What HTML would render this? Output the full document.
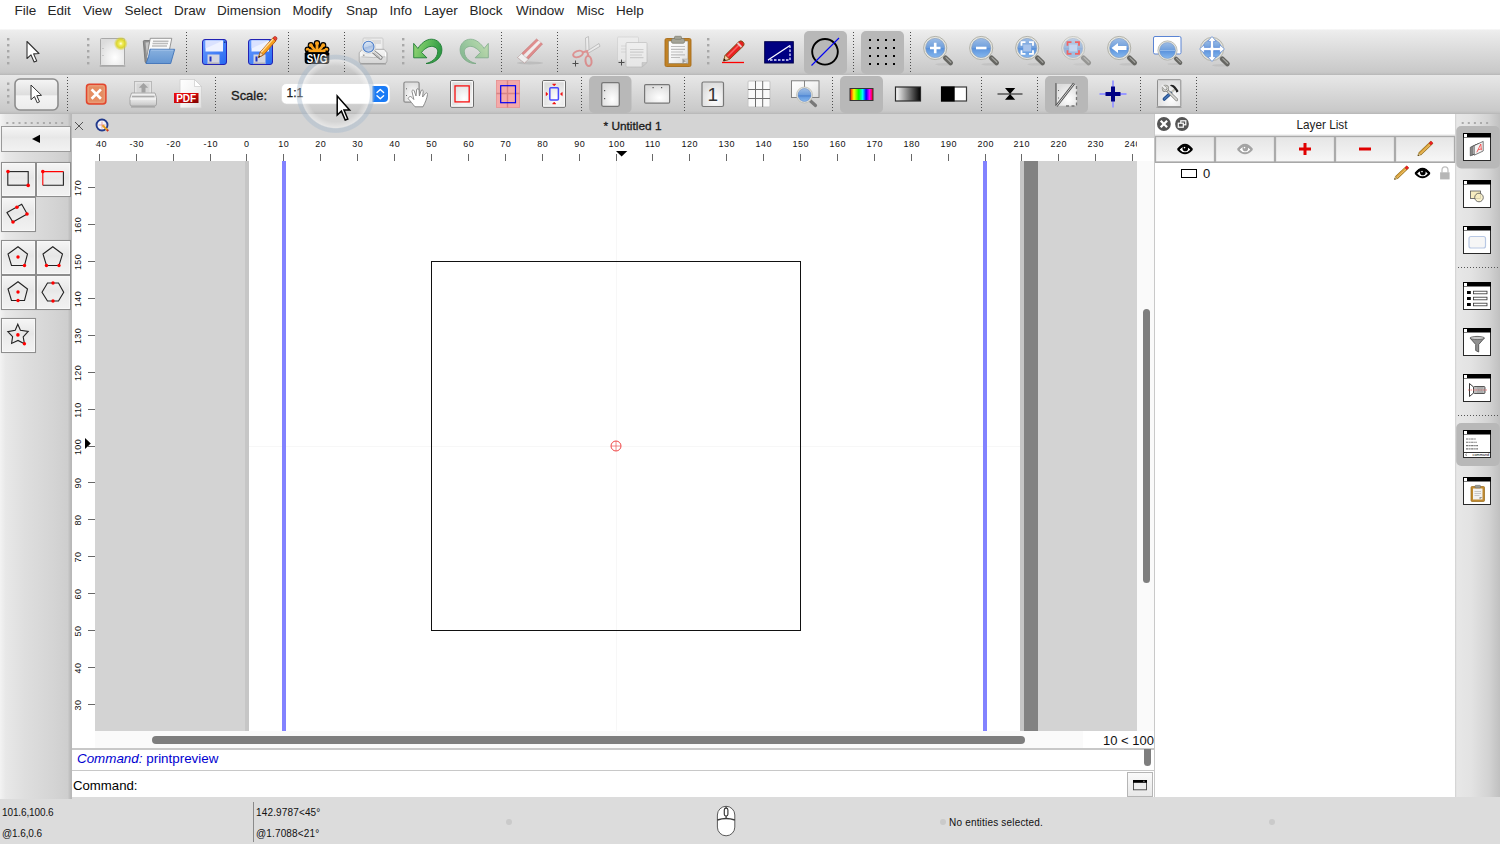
<!DOCTYPE html>
<html><head><meta charset="utf-8"><title>QCAD</title>
<style>
*{box-sizing:border-box;margin:0;padding:0}
html,body{width:1500px;height:844px;overflow:hidden;background:#fff;font-family:"Liberation Sans",sans-serif;color:#000}
.abs,.abs>*{position:absolute}
svg{position:absolute;overflow:visible}
#menu{left:0;top:0;width:1500px;height:30px;background:#fff}
#menu span{top:3px;font-size:13.5px;color:#262626;white-space:nowrap;line-height:16px}
#tb1{left:0;top:29px;width:1500px;height:46px;background:linear-gradient(#fafafa 0,#eeeeee 3%,#ebebeb 8%,#d9d9d9 52%,#c9c9c9 93%,#c4c4c4 96%,#b7b7b7 100%)}
#tb2{left:0;top:75px;width:1500px;height:39px;background:linear-gradient(#e9e9e9 0,#e6e6e6 5%,#d6d6d6 52%,#c9c9c9 92%,#c2c2c2 96%,#b6b6b6 100%)}
#left{left:0;top:114px;width:72px;height:684.500px;background:linear-gradient(90deg,#f3f3f3 0,#e8e8e8 8%,#dedede 35%,#d4d4d4 75%,#cecece 94%,#bcbcbc 97.5%,#b6b6b6 100%)}
#tabbar{left:72px;top:114px;width:1082px;height:24px;background:#d4d4d4}
#rulerh{left:72px;top:138px;width:1082px;height:23px;background:#fff;overflow:hidden}
#rulerv{left:72px;top:161px;width:23px;height:570px;background:#fff;overflow:hidden}
#canvas{left:95px;top:161px;width:1042px;height:570px;background:#fff;overflow:hidden}
#vscroll{left:1137px;top:161px;width:17px;height:570px;background:#fafafa}
#hscroll{left:95px;top:731px;width:988px;height:17px;background:#fafafa}
#zoomlbl{left:1083px;top:731px;width:71px;height:17px;background:#fff;font-size:13px;text-align:right;padding-right:0;line-height:19px;color:#111;overflow:hidden}
#cmdhist{left:72px;top:748px;width:1082px;height:23px;background:#fff;border-top:2px solid #c8c8c8;border-bottom:1px solid #c8c8c8}
#cmdline{left:72px;top:771px;width:1082px;height:27px;background:#fff}
#layers{left:1154px;top:114px;width:301px;height:683px;background:#fff;border-left:1px solid #c9c9c9}
#right{left:1455px;top:114px;width:45px;height:683px;background:linear-gradient(90deg,#cfcfcf 0,#e7e7e7 4%,#e3e3e3 35%,#d3d3d3 75%,#c0c0c0 100%)}
#status{left:0;top:797px;width:1500px;height:47px;background:#dcdcdc}
.st{font-size:10px;line-height:12px;color:#111;white-space:nowrap}
.hd{width:2px;height:2px;background:#aaa}
.vsep{width:1px;background:repeating-linear-gradient(#444 0 1px,transparent 1px 3px)}
.hl{background:#b9b9b9;border-radius:5px}
.rt{font-size:9px;color:#111;white-space:nowrap;line-height:10px;letter-spacing:.4px}
</style></head><body>
<div id="menu" class="abs"><span style="left:14.5px">File</span><span style="left:47.5px">Edit</span><span style="left:83px">View</span><span style="left:124.5px">Select</span><span style="left:174px">Draw</span><span style="left:217px">Dimension</span><span style="left:292.5px">Modify</span><span style="left:346px">Snap</span><span style="left:389.5px">Info</span><span style="left:424px">Layer</span><span style="left:469.5px">Block</span><span style="left:516px">Window</span><span style="left:576.5px">Misc</span><span style="left:616px">Help</span></div>
<div id="tb1" class="abs"></div>
<div id="tb2" class="abs"></div>
<div id="left" class="abs"></div>
<div id="tabbar" class="abs"></div>
<svg id="tb1svg" style="left:0;top:30px" width="1500" height="45" viewBox="0 30 1500 45" font-family="Liberation Sans, sans-serif">
<defs>
<linearGradient id="pg" x1="0" y1="0" x2="1" y2="1"><stop offset="0" stop-color="#fff"/><stop offset=".5" stop-color="#f4f4f4"/><stop offset="1" stop-color="#dedede"/></linearGradient>
<radialGradient id="pgr" cx=".6" cy=".7" r=".7"><stop offset="0" stop-color="#fff"/><stop offset="1" stop-color="#dcdcdc"/></radialGradient>
<radialGradient id="glow"><stop offset="0" stop-color="#fffff0"/><stop offset=".25" stop-color="#f2ee60"/><stop offset=".6" stop-color="#dcd628" stop-opacity=".95"/><stop offset="1" stop-color="#d8d020" stop-opacity="0"/></radialGradient>
<linearGradient id="lens" x1="0" y1="0" x2="0" y2="1"><stop offset="0" stop-color="#9dbde6"/><stop offset=".48" stop-color="#6f9fdc"/><stop offset=".52" stop-color="#5a92dc"/><stop offset="1" stop-color="#86b8ee"/></linearGradient>
<linearGradient id="grn" x1="0" y1="0" x2="1" y2=".3"><stop offset="0" stop-color="#9cd878"/><stop offset=".5" stop-color="#62bc5c"/><stop offset="1" stop-color="#2f9a44"/></linearGradient>
<linearGradient id="flp" x1="0" y1="0" x2="1" y2="1"><stop offset="0" stop-color="#6a9cff"/><stop offset="1" stop-color="#2468f0"/></linearGradient>
<linearGradient id="fold" x1="0" y1="0" x2="0" y2="1"><stop offset="0" stop-color="#88b0de"/><stop offset="1" stop-color="#6496d2"/></linearGradient>
<linearGradient id="prn1" x1="0" y1="0" x2="0" y2="1"><stop offset="0" stop-color="#f6f6f6"/><stop offset=".5" stop-color="#ececec"/><stop offset=".55" stop-color="#e0e0e0"/><stop offset="1" stop-color="#d4d4d4"/></linearGradient><linearGradient id="lens2" x1="0" y1="0" x2=".3" y2="1"><stop offset="0" stop-color="#e4eefa"/><stop offset=".55" stop-color="#c0d2ea"/><stop offset=".6" stop-color="#a4bce0"/><stop offset="1" stop-color="#c4d6ee"/></linearGradient><g id="mag"><ellipse cx="9" cy="16.300" rx="9" ry="1.300" fill="#888" opacity=".18"/><line x1="7" y1="7" x2="10" y2="10" stroke="#9c9c98" stroke-width="2.400"/><line x1="10.300" y1="10" x2="15.300" y2="14.800" stroke="#666662" stroke-width="5" stroke-linecap="round"/><line x1="10.800" y1="9.600" x2="15.600" y2="14.200" stroke="#a2a29e" stroke-width="1.300" stroke-linecap="round"/><circle r="11.6" fill="#e6e6de" stroke="#a4a49c" stroke-width=".8"/><circle r="9.6" fill="url(#lens)" stroke="#7a94bc" stroke-width=".6"/></g>
<g id="hdl5" fill="#a8a8a8"><rect y="38" width="2.4" height="2.4"/><rect y="44" width="2.4" height="2.4"/><rect y="50" width="2.4" height="2.4"/><rect y="56" width="2.4" height="2.4"/><rect y="62" width="2.4" height="2.4"/></g>
<line id="sp1" y1="32" y2="72" stroke="#4c4c4c" stroke-width="1" stroke-dasharray="1 2"/>
<g id="floppy"><rect x=".5" y=".5" width="24" height="25" rx="2.5" fill="url(#flp)" stroke="#2222b4"/><path d="M3.5 1.5h17.5v11h-17.5z" fill="#eef2ff"/><path d="M3.5 1.5h17.5l-17.5 8z" fill="#d4ddff" opacity=".8"/><rect x="22" y="2.5" width="1.5" height="1.5" fill="#1a3a90"/><rect x="5.5" y="15.5" width="12" height="9.5" fill="#d4d6e0"/><rect x="7.5" y="17.5" width="2" height="5" fill="#2030c0"/><rect x="6" y="23.5" width="11" height="1.5" fill="#b0b0b8"/></g>
</defs>
<use href="#hdl5" x="7"/>
<path d="M27 41.5v17l4-3.6 3.1 7.1 2.6-1.1-3.1-7 5.4-.4z" fill="#fff" stroke="#333" stroke-width="1.1" stroke-linejoin="round"/>
<use href="#hdl5" x="87"/>
<!-- new -->
<rect x="99.5" y="65" width="26" height="2" rx="1" fill="#999" opacity=".55"/>
<rect x="100.5" y="38.5" width="24" height="27" rx="1" fill="url(#pgr)" stroke="#a8a8a8"/>
<rect x="102.5" y="48" width="1" height="1" fill="#aaa"/><rect x="102.5" y="55" width="1" height="1" fill="#aaa"/>
<circle cx="120.8" cy="43.6" r="7" fill="url(#glow)"/>
<!-- open -->
<path d="M143.300 41.500q0-1 1-1h5.500l1 1.500v20l-4.500 1q-1 0-1.200-1.200z" fill="#909090" stroke="#6e6e6e" stroke-width=".8"/>
<path d="M145.500 42.500l3.500-.3-1.500 19z" fill="#c8c8c8"/>
<path d="M150.300 38.300h21.500l-2.300 11.200-23 9z" fill="#fafafa" stroke="#808080" stroke-width=".8" stroke-linejoin="round"/>
<path d="M153 41.200h15.500M152.500 43.600h15.500M152 46h15" stroke="#bcbcbc" stroke-width="1.500"/>
<path d="M150 49.200l24.700.1-4 14.200h-24.700q3-6 4-14.300z" fill="url(#fold)" stroke="#3f73b8" stroke-width=".9" stroke-linejoin="round"/>
<path d="M151 50.200h22.300" stroke="#a8c8ec" stroke-width=".8"/>
<use href="#sp1" x="186.500"/>
<use href="#floppy" x="202" y="39"/>
<use href="#floppy" x="248" y="39"/>
<!-- pencil on save-as -->
<path d="M258.500 57.500l1.800-5.500 12.500-14 3.200 2.800-12.600 14.200z" fill="#f6a020" stroke="#b85c10" stroke-width=".9" stroke-linejoin="round"/>
<path d="M272.800 38l1.400-1.300q1.200-.6 2.200.4t.4 2.100l-1.300 1.600z" fill="#f04030" stroke="#a02818" stroke-width=".7"/>
<path d="M261 52.500l12.200-13.600" stroke="#ffe0a0" stroke-width="1.200"/>
<path d="M258.500 57.500l1.800-5.500 3 2.800z" fill="#f4d8b0" stroke="#8a4a10" stroke-width=".6"/><path d="M258.500 57.500l.7-2 1.200 1.200z" fill="#222"/>
<use href="#sp1" x="288.500"/>
<!-- svg -->
<g stroke="#000" stroke-width="5.400" stroke-linecap="round"><path d="M317 53V43.600M317 53l-6-7.500M317 53l6-7.500M317 53l-9.200-3.300M317 53l9.200-3.300"/></g>
<g fill="#000"><circle cx="317" cy="43.300" r="3.200"/><circle cx="310.800" cy="45.200" r="3.100"/><circle cx="323.200" cy="45.200" r="3.100"/><circle cx="307.600" cy="49.600" r="3"/><circle cx="326.400" cy="49.600" r="3"/></g>
<g stroke="#f9a21c" stroke-width="2.800" stroke-linecap="round"><path d="M317 53V43.600M317 53l-6-7.500M317 53l6-7.500M317 53l-9.200-3.300M317 53l9.200-3.300"/></g>
<g fill="#f9a21c"><circle cx="317" cy="43.300" r="2"/><circle cx="310.800" cy="45.200" r="1.900"/><circle cx="323.200" cy="45.200" r="1.900"/><circle cx="307.600" cy="49.600" r="1.800"/><circle cx="326.400" cy="49.600" r="1.800"/></g>
<path d="M306.500 50.500h21l1.800 3v7.500q0 3-3 3h-18.600q-3 0-3-3v-7.500z" fill="#000"/>
<path d="M308.500 51h17" stroke="#f9a21c" stroke-width="2.200"/>
<text x="317" y="62.600" font-size="12.500" font-weight="bold" fill="#fff" text-anchor="middle" textLength="20.500" lengthAdjust="spacingAndGlyphs">SVG</text>
<use href="#sp1" x="344.500"/>
<!-- print preview -->
<rect x="363" y="38" width="20" height="13" rx="1" fill="#ececec" stroke="#c4c4c4" stroke-width=".8"/>
<rect x="372" y="40" width="9" height="9" fill="#dcdcdc"/><rect x="375" y="44" width="6" height="5" fill="#f0f0f0"/>
<path d="M362.200 49.300h22l2.800 3.500v8.200q0 2.500-2.500 2.500h-22.800q-2.500 0-2.500-2.500v-8.200z" fill="url(#prn1)" stroke="#a8a8a8" stroke-width=".9"/>
<path d="M361.500 56.800q12 1.600 23.500 0" stroke="#c0c0c0" stroke-width="1" fill="none"/><path d="M361 52.500v3.500M385.500 52.500v3.500" stroke="#fff" stroke-width="1"/>
<rect x="363.200" y="54.600" width="1.200" height="1.200" fill="#777"/>
<path d="M360 64h26" stroke="#8a8a8a" stroke-width="1.400" opacity=".55"/>
<line x1="373.500" y1="51.700" x2="380.600" y2="57.600" stroke="#7c7c7c" stroke-width="4" stroke-linecap="round"/><line x1="373.500" y1="51.700" x2="380.600" y2="57.600" stroke="#e6e6e6" stroke-width="2.400" stroke-linecap="round"/><line x1="374" y1="52.700" x2="380" y2="57.700" stroke="#a0a0a0" stroke-width=".7"/>
<circle cx="368.500" cy="46.700" r="7.100" fill="#f7f7f5" stroke="#cdcdc9" stroke-width=".6"/>
<circle cx="368.500" cy="46.700" r="5.500" fill="url(#lens2)" stroke="#4a7cc8" stroke-width="1.100"/>
<use href="#hdl5" x="402"/>
<!-- undo / redo -->
<g id="undo"><path d="M413.700 43.400L417.900 48.500C421 43.500 426 39.200 431.400 39.200C437.500 39.200 442 44 441.900 50C441.800 58 434 64 426 63.500C431 62.500 437.500 58.500 437.700 51.800C437.800 48.500 435 46.400 431.400 46.400C427.500 46.400 424 49.500 421.500 52.400L426.900 57.800L413.700 57.800z" fill="url(#grn)" stroke="#1f7c34" stroke-width=".9" stroke-linejoin="round"/></g>
<use href="#undo" transform="translate(902,0) scale(-1,1)" opacity=".45"/>
<use href="#sp1" x="501.500"/>
<!-- eraser (disabled) -->
<g opacity=".7">
<ellipse cx="530" cy="63" rx="13" ry="1.500" fill="#999" opacity=".5"/>
<path d="M517.500 57.500l19-18.500 6 5-18 19z" fill="#e06c6c" stroke="#b84848" stroke-width=".6"/>
<path d="M519.500 59l19-18.600 2.300 1.900-18.400 19z" fill="#f8f4f4"/>
<path d="M517.500 57.500l4-3.900 6.800 5.800-3.800 3.600z" fill="#fbfbfb" stroke="#aaa" stroke-width=".6"/>
</g>
<use href="#sp1" x="557.500"/>
<!-- scissors (disabled) -->
<g opacity=".55">
<path d="M585.500 38l3-1.500 .5 14-3 2z" fill="#f4f4f4" stroke="#888" stroke-width=".7"/>
<path d="M599 43.500l1 2.800-11.500 6.700-2-1.500z" fill="#f4f4f4" stroke="#888" stroke-width=".7"/>
<ellipse cx="578" cy="54" rx="5" ry="3" transform="rotate(-18 578 54)" fill="none" stroke="#e05a5a" stroke-width="2"/>
<ellipse cx="588.500" cy="61" rx="3" ry="5" transform="rotate(-8 588.500 61)" fill="none" stroke="#e05a5a" stroke-width="2"/>
<path d="M582.500 52.500l4.500-1.500 1.500 5" fill="none" stroke="#e05a5a" stroke-width="2"/>
</g>
<path d="M572.500 63.500h6M575.500 60.500v6" stroke="#4c4c4c" stroke-width="1"/>
<!-- copy (disabled) -->
<g opacity=".6">
<rect x="617.500" y="37" width="21" height="24" rx="1" fill="#f2f2f2" stroke="#c8c8c8" stroke-width=".8"/>
<path d="M621 46h8M621 49h8M621 52h8" stroke="#d0d0d0" stroke-width="1.200"/>
<path d="M626 43.500q0-1 1-1h19q1 0 1 1v19l-5 4.500h-15q-1 0-1-1z" fill="#f8f8f8" stroke="#b0b0b0" stroke-width=".8"/>
<path d="M630 49.500h13.500M630 52.200h13.500M630 55h12M630 57.700h13.500" stroke="#c4c4c4" stroke-width="1.200"/>
<path d="M647 62.500l-5 4.500v-4.500z" fill="#c8c8c8" stroke="#aaa" stroke-width=".5"/>
</g>
<path d="M618.500 62.500h6M621.500 59.500v6" stroke="#4c4c4c" stroke-width="1"/>
<!-- paste -->
<rect x="665" y="38.500" width="26" height="28" rx="1.500" fill="#c08226" stroke="#a86c18" stroke-width=".9"/>
<rect x="668.500" y="41" width="19.500" height="22.500" fill="url(#pg)" stroke="#8c7a58" stroke-width=".6"/>
<path d="M671 46.500h14M671 49.300h14M671 52h12M671 54.800h14M671 57.500h9" stroke="#bdbdbd" stroke-width="1.200"/>
<path d="M682.500 63.500v-4.500h5.500z" fill="#9a9a9a"/><path d="M682.500 59h5.500v4.500z" fill="#d0d0d0" stroke="#999" stroke-width=".4"/>
<rect x="671.500" y="38.500" width="13" height="4.800" rx="1.500" fill="#a4a498" stroke="#7c7c70" stroke-width=".7"/>
<rect x="674.500" y="36.300" width="7" height="3" rx="1" fill="#a4a498" stroke="#7c7c70" stroke-width=".7"/>
<use href="#hdl5" x="707"/>
<!-- red pencil -->
<path d="M722 62.500h22" stroke="#f00" stroke-width="1.300"/>
<path d="M723.500 61l1.800-6 13.700-13.500q2-1.500 4 .4t.6 3.900l-13.900 13.500z" fill="#e82020" stroke="#7a4a10" stroke-width=".9" stroke-linejoin="round"/>
<path d="M727.500 56.500l12.500-12.500" stroke="#f86060" stroke-width="1.600"/>
<path d="M737.500 43l4 4" stroke="#e8c8c8" stroke-width="1.800"/>
<path d="M723.500 61l1.800-6 4.300 4.200z" fill="#f0d0a8" stroke="#7a4a10" stroke-width=".7"/><path d="M723.500 61l.8-2.500 1.700 1.700z" fill="#111"/>
<!-- measure -->
<rect x="764.700" y="41.700" width="28.600" height="21.300" fill="#000082" stroke="#00004c" stroke-width="1"/>
<path d="M768 60l22-14.500" stroke="#fff" stroke-width="1.300"/>
<path d="M790 45.500v14.500h-22" fill="none" stroke="#e4e4ff" stroke-width="1.300" stroke-dasharray="2.500 1.500"/>
<!-- circle tool highlighted -->
<rect x="804" y="31" width="43" height="43" rx="5" fill="#b8b8b8"/>
<circle cx="825" cy="51.800" r="12.800" fill="none" stroke="#000" stroke-width="1.900"/>
<path d="M811.500 65.500l27.500-27.500" stroke="#0000f4" stroke-width="1.100"/>
<use href="#sp1" x="853.500"/>
<rect x="861" y="31" width="43" height="43" rx="5" fill="#b8b8b8"/>
<g fill="#000"><rect x="869" y="39" width="2" height="2"/><rect x="877" y="39" width="2" height="2"/><rect x="885" y="39" width="2" height="2"/><rect x="893" y="39" width="2" height="2"/><rect x="869" y="47" width="2" height="2"/><rect x="877" y="47" width="2" height="2"/><rect x="885" y="47" width="2" height="2"/><rect x="893" y="47" width="2" height="2"/><rect x="869" y="55" width="2" height="2"/><rect x="877" y="55" width="2" height="2"/><rect x="885" y="55" width="2" height="2"/><rect x="893" y="55" width="2" height="2"/><rect x="869" y="63" width="2" height="2"/><rect x="877" y="63" width="2" height="2"/><rect x="885" y="63" width="2" height="2"/><rect x="893" y="63" width="2" height="2"/></g>
<use href="#sp1" x="910.500"/>
<!-- zooms -->
<use href="#mag" x="935.200" y="48"/><path d="M930 48h10.500M935.200 42.700v10.600" stroke="#fff" stroke-width="2.600"/>
<use href="#mag" x="981.200" y="48"/><path d="M976 48h10.500" stroke="#fff" stroke-width="2.600"/>
<use href="#mag" x="1027.200" y="48"/><rect x="1023.200" y="44.500" width="8" height="7" fill="#a8c4ec"/><path d="M1021.500 45.800v-3.600h4M1029 42.200h4v3.600M1033 50.200v3.600h-4M1025.500 53.800h-4v-3.600" fill="none" stroke="#fff" stroke-width="1.800"/>
<g opacity=".55"><use href="#mag" x="1073.200" y="48"/></g><rect x="1069.200" y="44.500" width="8" height="7" fill="#c4d6f0"/><path d="M1067.500 45.800v-3.600h4M1075 42.200h4v3.600M1079 50.200v3.600h-4M1071.500 53.800h-4v-3.600" fill="none" stroke="#f06464" stroke-width="1.800"/>
<use href="#mag" x="1119.200" y="48"/><path d="M1111.500 48l6.500-5v3h8.500v4h-8.500v3z" fill="#fff"/>
<rect x="1153.500" y="36.500" width="27.500" height="17.500" rx="1.500" fill="#fff" stroke="#5a84d4" stroke-width="1"/>
<g transform="translate(1167.500 50.500) scale(.83)"><use href="#mag"/></g>
<path d="M1160 50.500h15" stroke="#9cc0ee" stroke-width=".8"/>
<use href="#mag" x="1212" y="49"/>
<path d="M1199.500 49l4.800-4.200v2.600h6.100v-6.100h-2.600l4.200-4.800 4.200 4.800h-2.600v6.100h6.100v-2.600l4.800 4.200-4.800 4.200v-2.600h-6.100v6.100h2.600l-4.200 4.800-4.200-4.800h2.600v-6.100h-6.100v2.600z" fill="#fff" stroke="#5a8ad8" stroke-width=".7" stroke-linejoin="round"/>
</svg>
<svg id="tb2svg" style="left:0;top:75px" width="1500" height="39" viewBox="0 75 1500 39" font-family="Liberation Sans, sans-serif">
<defs>
<line id="sp2" y1="77" y2="112" stroke="#4c4c4c" stroke-width="1" stroke-dasharray="1 2"/>
<linearGradient id="btn" x1="0" y1="0" x2="0" y2="1"><stop offset="0" stop-color="#f6f6f6"/><stop offset=".5" stop-color="#dedede"/><stop offset=".55" stop-color="#f4f4f4"/><stop offset="1" stop-color="#ececec"/></linearGradient>
<linearGradient id="rb" x1="0" y1="0" x2="1" y2="0"><stop offset="0" stop-color="#f00"/><stop offset=".17" stop-color="#ff0"/><stop offset=".38" stop-color="#0f0"/><stop offset=".55" stop-color="#0ff"/><stop offset=".7" stop-color="#00f"/><stop offset=".85" stop-color="#f0f"/><stop offset="1" stop-color="#f00"/></linearGradient>
<linearGradient id="bwg" x1="0" y1="0" x2="1" y2="0"><stop offset="0" stop-color="#fff"/><stop offset="1" stop-color="#000"/></linearGradient>
<linearGradient id="pdfr" x1="0" y1="0" x2="1" y2="1"><stop offset="0" stop-color="#f01010"/><stop offset=".5" stop-color="#d00808"/><stop offset="1" stop-color="#7a0000"/></linearGradient>
<linearGradient id="prn" x1="0" y1="0" x2="0" y2="1"><stop offset="0" stop-color="#f2f2f2"/><stop offset=".6" stop-color="#e2e2e2"/><stop offset="1" stop-color="#c4c4c4"/></linearGradient>
</defs>
<g fill="#a8a8a8"><rect x="7" y="82.500" width="2.400" height="2.400"/><rect x="7" y="88.800" width="2.400" height="2.400"/><rect x="7" y="95" width="2.400" height="2.400"/><rect x="7" y="101.200" width="2.400" height="2.400"/></g>
<rect x="15" y="79" width="43" height="31" rx="5" fill="url(#btn)" stroke="#8c8c8c" stroke-width="1.600"/>
<path d="M31 85v14.700l3.500-3.100 2.700 6.200 2.300-1-2.700-6.100 4.700-.4z" fill="#fff" stroke="#333" stroke-width="1" stroke-linejoin="round"/>
<use href="#sp2" x="67.500"/>
<!-- close preview -->
<rect x="86.500" y="84.200" width="19.400" height="19.700" rx="3" fill="#e58d62" stroke="#e2452e" stroke-width="1.500"/>
<rect x="88.200" y="85.900" width="16" height="16.300" rx="1.500" fill="none" stroke="#eca380" stroke-width="1"/>
<path d="M91.600 89.400l9.300 9.300M100.900 89.400l-9.300 9.300" stroke="#fff" stroke-width="2.700"/>
<!-- print -->
<rect x="134.500" y="81.500" width="17" height="13" fill="#e4e4e4" stroke="#b4b4b4" stroke-width=".9"/>
<rect x="136.500" y="83.500" width="13" height="9" fill="#d6d6d6"/>
<path d="M141.500 92.500v-4.700h-2.700l4.700-4.800 4.700 4.800h-2.700v4.700z" fill="#a2a2a2"/>
<path d="M131.500 93h23.500l1.500 4.500v6.500q0 2-2 2h-22.500q-2 0-2-2v-6.500z" fill="url(#prn)" stroke="#a0a0a0" stroke-width=".9"/>
<path d="M132 96.500h22.500" stroke="#aaa" stroke-width="1.600"/><path d="M130 99h26" stroke="#fafafa" stroke-width="1"/>
<path d="M131 107h24" stroke="#8c8c8c" stroke-width="1.200" opacity=".6"/>
<!-- pdf -->
<path d="M180 79.500h14.500l7 7v21.500h-21.500z" fill="url(#pg)" stroke="#cfcfcf" stroke-width=".8"/>
<path d="M194.500 79.500v7h7z" fill="#fff" stroke="#c4c4c4" stroke-width=".6"/>
<rect x="174" y="93" width="24.500" height="10" fill="url(#pdfr)"/>
<text x="186.200" y="101.800" font-size="10.500" font-weight="bold" fill="#fff" text-anchor="middle" textLength="20" lengthAdjust="spacingAndGlyphs">PDF</text>
<use href="#sp2" x="215.500"/>
<text x="231" y="99.600" font-size="13.300" fill="#1c1c1c" stroke="#1c1c1c" stroke-width=".35" textLength="36" lengthAdjust="spacingAndGlyphs">Scale:</text>
<!-- combo -->
<rect x="281.500" y="83.500" width="108.500" height="20.500" rx="5" fill="#fff" stroke="#d9d9d9" stroke-width=".6"/>
<text x="286.500" y="97.300" font-size="12" fill="#222" stroke="#222" stroke-width=".25">1:1</text>
<path d="M372.500 86h11.500q4 0 4 4v8q0 4-4 4h-11.500z" fill="#1a7bf6"/>
<path d="M377 92.500l3.300-3 3.300 3M377 95.800l3.300 3 3.300-3" fill="none" stroke="#fff" stroke-width="1.400" stroke-linecap="round" stroke-linejoin="round"/>
<!-- hand/pan -->
<rect x="403.900" y="82" width="15.200" height="20.200" rx="1.500" fill="url(#pgr)" stroke="#8a8a8a" stroke-width="1.200"/>
<rect x="406" y="88.300" width="1" height="1" fill="#666"/><rect x="406" y="95" width="1" height="1" fill="#666"/>
<path d="M408.800 97.500C409.500 96 411 96.300 412 97.500L413.800 99.500L412 91.500C411.600 90 413.600 89.300 414.200 90.800L416 96L416.600 90C416.600 88.200 419 88.200 419 90L419.400 96L421 91C421.400 89.400 423.500 89.800 423.200 91.500L422.600 97L425.400 93.600C426 92.200 427.900 92.800 427.500 94.400C427 98 425.500 102 423 106.800L415 106.800C412.500 104 410.500 101 408.600 99.200C408 98.500 408.200 98 408.800 97.500z" fill="#fff" stroke="#808080" stroke-width=".9" stroke-linejoin="round"/>
<!-- red page -->
<rect x="450.600" y="80.600" width="22.800" height="26.600" rx="1" fill="#e6e6e6" stroke="#5e5e5e" stroke-width="1"/><rect x="451.700" y="81.700" width="20.600" height="24.400" fill="url(#pgr)" stroke="#fff" stroke-width="1"/>
<rect x="455" y="85.900" width="14.200" height="16" fill="none" stroke="#f81010" stroke-width="1.300"/>
<!-- pink grid -->
<rect x="496" y="80" width="24" height="27.800" fill="#f4a9a9"/>
<path d="M507.500 80v27.800M496 93.500h24" stroke="#d07c7c" stroke-width="1.400" opacity=".8"/>
<rect x="496.300" y="80.300" width="23.400" height="27.200" fill="none" stroke="#e08e8e" stroke-width=".6"/>
<rect x="500.700" y="85.700" width="14.800" height="17" fill="none" stroke="#0000f4" stroke-width="1.200"/>
<!-- auto fit -->
<rect x="542.600" y="80.600" width="22.800" height="26.600" rx="1" fill="#e6e6e6" stroke="#5e5e5e" stroke-width="1"/><rect x="543.700" y="81.700" width="20.600" height="24.400" fill="url(#pgr)" stroke="#fff" stroke-width="1"/>
<rect x="549.800" y="87.800" width="8.600" height="12.300" rx="1" fill="none" stroke="#4848ff" stroke-width="1.500"/>
<path d="M552.500 84h3.400l-1.700 2zM552.500 104h3.400l-1.700-2zM546 92.300v3.400l2-1.700zM562.300 92.300v3.400l-2-1.700z" fill="#f01010" stroke="#f01010" stroke-width=".5"/>
<use href="#sp2" x="581.500"/>
<!-- portrait (pressed) -->
<rect x="589" y="76" width="42.500" height="37" rx="5" fill="#b8b8b8"/>
<rect x="601.700" y="82.700" width="17.600" height="23.600" rx="1.500" fill="url(#pgr)" stroke="#777" stroke-width="1.300"/>
<rect x="604" y="90" width="1.200" height="1.200" fill="#555"/><rect x="604" y="98" width="1.200" height="1.200" fill="#555"/>
<!-- landscape -->
<rect x="644.600" y="84.600" width="25" height="18.600" rx="1.200" fill="url(#pgr)" stroke="#777" stroke-width="1.200"/>
<rect x="652.500" y="87" width="1.200" height="1.200" fill="#555"/><rect x="661" y="87" width="1.200" height="1.200" fill="#555"/>
<use href="#sp2" x="684.500"/>
<!-- 1 -->
<rect x="702" y="82" width="21.500" height="24.500" rx="1.500" fill="url(#pgr)" stroke="#777" stroke-width="1.200"/>
<text x="712.800" y="101.400" font-size="19" fill="#333" text-anchor="middle">1</text>
<!-- grid -->
<rect x="748" y="81" width="22" height="26" rx="1" fill="#fafafa" stroke="#c4c4c4" stroke-width="1"/>
<path d="M755.500 81v26M762.700 81v26M748 89.500h22M748 98.500h22" stroke="#6e6e6e" stroke-width="1"/>
<!-- preview zoom -->
<rect x="791.500" y="80.800" width="27.500" height="16.700" fill="url(#pg)" stroke="#787878" stroke-width=".9"/>
<path d="M804.500 80.800v16.700" stroke="#787878" stroke-width=".9"/>
<line x1="810" y1="100.500" x2="815.500" y2="105.500" stroke="#787878" stroke-width="3.200" stroke-linecap="round"/>
<circle cx="804.500" cy="95" r="8" fill="#e8e8e0" stroke="#b4b4ac" stroke-width=".7"/>
<circle cx="804.500" cy="95" r="6.500" fill="url(#lens)" stroke="#6a8cc4" stroke-width=".6"/>
<path d="M798 96h13" stroke="#4a80c8" stroke-width=".7"/>
<use href="#sp2" x="832.500"/>
<!-- colour (pressed) -->
<rect x="840" y="76" width="43" height="37" rx="5" fill="#b8b8b8"/>
<rect x="850" y="88.500" width="23" height="12" fill="url(#rb)" stroke="#333" stroke-width="1"/>
<rect x="895.500" y="87" width="25" height="14" fill="url(#bwg)" stroke="#2a2a2a" stroke-width="1.200"/>
<rect x="941.500" y="87" width="25" height="14" fill="#fff" stroke="#3a3a3a" stroke-width="1.200"/><rect x="941" y="86.500" width="13.700" height="15" fill="#000"/>
<use href="#sp2" x="981.500"/>
<path d="M997.500 94h25" stroke="#333" stroke-width="1.200"/><path d="M1005 88h10.200l-5.100 6zM1005 99.800h10.200l-5.100-5.800z" fill="#000"/>
<use href="#sp2" x="1037.500"/>
<!-- page slash (pressed) -->
<rect x="1045" y="76" width="43" height="37" rx="5" fill="#b8b8b8"/>
<path d="M1055.800 83.500h18.500" stroke="#555" stroke-width="1"/>
<path d="M1056 83.300h17l3.700 2.500v20h-20.700z" fill="url(#pgr)"/>
<path d="M1056 83.300v22.500" stroke="#555" stroke-width="1.200"/>
<path d="M1076.500 86v20h-12" fill="none" stroke="#777" stroke-width="1.300" stroke-dasharray="3 2.500"/>
<rect x="1058" y="90" width="1" height="1" fill="#666"/><rect x="1058" y="97.500" width="1" height="1" fill="#666"/>
<path d="M1056.500 106l17.500-22.500" stroke="#4c4c4c" stroke-width="2.500"/><path d="M1056.500 106l17.500-22.500" stroke="#e4e4e4" stroke-width=".9"/>
<!-- blue cross -->
<path d="M1099.500 94h27M1113 80.500v27" stroke="#9898ff" stroke-width="1.800"/>
<path d="M1105.500 94h15M1113 86.500v15" stroke="#000084" stroke-width="4"/>
<use href="#sp2" x="1140.500"/>
<!-- tools -->
<rect x="1157.500" y="79.700" width="23.300" height="27" rx=".8" fill="url(#pgr)" stroke="#8e8e8e" stroke-width="1"/>
<path d="M1156.500 107.300h25" stroke="#777" stroke-width="1" opacity=".6"/>
<path d="M1175 89l-4.600 4.400" stroke="#c4c4bc" stroke-width="2.200"/>
<path d="M1170.600 93.300l-6.300 5.800" stroke="#204a87" stroke-width="3.400" stroke-linecap="round"/><path d="M1170.500 93.400l-6 5.500" stroke="#4474b4" stroke-width="1.800" stroke-linecap="round"/>
<path d="M1170.300 85q3.300-.7 5.200 1.800l2.800 3.700q.4 1.100-.6 1.500l-1.500.5-.4-1.700-2.200-2.800q-1.300-1.400-3.300-2.200z" fill="#222"/>
<path d="M1167 90.200l9.600 9.400" stroke="#8a8a86" stroke-width="3" stroke-linecap="round"/><path d="M1167 90.200l9.600 9.400" stroke="#d8d8d4" stroke-width="1.500" stroke-linecap="round"/>
<circle cx="1165.400" cy="88.400" r="2.500" fill="none" stroke="#8a8a86" stroke-width="2.200"/><circle cx="1165.400" cy="88.400" r="2.500" fill="none" stroke="#deded8" stroke-width="1"/>
<path d="M1165.200 88.200l-3.200-3" stroke="#f0f0f0" stroke-width="1.800"/>
<use href="#sp2" x="1196.500"/>
</svg>
<svg id="leftsvg" style="left:0;top:114px" width="72" height="684" viewBox="0 114 72 684">
<defs>
<linearGradient id="lb" x1="0" y1="0" x2="0" y2="1"><stop offset="0" stop-color="#f6f6f6"/><stop offset=".45" stop-color="#e7e7e7"/><stop offset=".55" stop-color="#ebebeb"/><stop offset="1" stop-color="#f2f2f2"/></linearGradient>
<g id="lbtn"><rect width="34" height="34" fill="url(#lb)" stroke="#8e8e8e" stroke-width="1.100"/><rect x="1" y="1" width="32" height="32" fill="none" stroke="#fbfbfb" stroke-width=".8"/></g>
</defs>
<g fill="#aaa"><rect x="6.300" y="122" width="2" height="2"/><rect x="12.400" y="122" width="2" height="2"/><rect x="18.500" y="122" width="2" height="2"/><rect x="24.600" y="122" width="2" height="2"/><rect x="30.700" y="122" width="2" height="2"/><rect x="36.800" y="122" width="2" height="2"/><rect x="42.900" y="122" width="2" height="2"/><rect x="49" y="122" width="2" height="2"/><rect x="55.100" y="122" width="2" height="2"/><rect x="61.200" y="122" width="2" height="2"/></g>
<rect x="1.500" y="126.500" width="69" height="25" fill="url(#lb)" stroke="#9a9a9a"/>
<path d="M32 138.900l8-4.100v8.200z" fill="#000"/>
<use href="#lbtn" x="1.500" y="162.500"/><use href="#lbtn" x="36.500" y="162.500"/><use href="#lbtn" x="1.500" y="197.500"/>
<use href="#lbtn" x="1.500" y="240.500"/><use href="#lbtn" x="36.500" y="240.500"/><use href="#lbtn" x="1.500" y="275.500"/><use href="#lbtn" x="36.500" y="275.500"/>
<use href="#lbtn" x="1.500" y="318.500"/>
<g fill="none" stroke="#222" stroke-width="1.100" stroke-linejoin="miter">
<rect x="7.800" y="171.600" width="20.400" height="13.600"/>
<path d="M42.800 185.200h20.600v-13.600"/>
<path d="M7 212.600l14.700-8.400 5.500 9.800-14.300 8.100z"/>
<path d="M18 246.700l9.500 7.300-3 11.500h-13l-3.500-11.500z"/>
<path d="M52.800 246.700l9.700 7.300-3.500 11.500h-12.500l-3.500-11.500z"/>
<path d="M18 281.700l9.500 7.300-3 11.500h-13l-3.500-11.500z"/>
<path d="M42 292.200l5.500-9.200h11l5.200 9.200-5.200 8.800h-11z"/>
<path d="M17.800 324.200L20.400 330.200L28.200 331.400L23.200 336.800L24.400 343.700L18 340.400L11.600 343.400L12.600 336.600L7.800 331.600L15.200 330.200z"/>
</g>
<path d="M42.800 185.200v-13.600h20.600" fill="none" stroke="#f00" stroke-width="1.100"/>
<g fill="#f00"><circle cx="8" cy="171.600" r="1.800"/><circle cx="28.200" cy="185.400" r="1.800"/><circle cx="42.800" cy="171.600" r="1.800"/>
<circle cx="16.900" cy="207.200" r="1.800"/><circle cx="27" cy="214" r="1.800"/><circle cx="13" cy="222" r="1.800"/>
<circle cx="18" cy="257" r="1.700"/><circle cx="24.500" cy="265.500" r="1.700"/>
<circle cx="46.500" cy="265.500" r="1.700"/><circle cx="59" cy="265.500" r="1.700"/>
<circle cx="18" cy="292" r="1.700"/><circle cx="18" cy="300.500" r="1.700"/>
<circle cx="53" cy="283" r="1.700"/><circle cx="53" cy="301" r="1.700"/>
<circle cx="17.900" cy="334.900" r="1.800"/><circle cx="24.400" cy="343.800" r="1.700"/></g>
</svg>
<svg style="left:72px;top:114px" width="1082" height="24" viewBox="72 114 1082 24" font-family="Liberation Sans, sans-serif">
<path d="M75 122l8 8M83 122l-8 8" stroke="#555" stroke-width="1"/>
<circle cx="102" cy="125" r="5.500" fill="#f4f4f8" stroke="#223a8c" stroke-width="1.900"/>
<path d="M98.500 125h7M102 121.500v7" stroke="#e08080" stroke-width=".7"/>
<path d="M102.500 125.200l4.800 4.800" stroke="#e8a020" stroke-width="2"/><path d="M107 129.700l1.200 1.300" stroke="#d03020" stroke-width="2"/>
<text x="632.500" y="130" font-size="11.500" fill="#1a1a1a" stroke="#1a1a1a" stroke-width=".3" text-anchor="middle" textLength="58" lengthAdjust="spacingAndGlyphs">* Untitled 1</text>
</svg>
<div id="rulerh" class="abs">
<div class="abs" style="left:23px;top:0;width:1042px;height:23px;overflow:hidden">
<i style="left:4px;top:16px;width:1px;height:7px;background:#686868"></i><span class="rt" style="left:-15.3px;top:1px;width:40px;text-align:center">-40</span>
<i style="left:41px;top:16px;width:1px;height:7px;background:#686868"></i><span class="rt" style="left:21.7px;top:1px;width:40px;text-align:center">-30</span>
<i style="left:78px;top:16px;width:1px;height:7px;background:#686868"></i><span class="rt" style="left:58.7px;top:1px;width:40px;text-align:center">-20</span>
<i style="left:115px;top:16px;width:1px;height:7px;background:#686868"></i><span class="rt" style="left:95.7px;top:1px;width:40px;text-align:center">-10</span>
<i style="left:151px;top:16px;width:1px;height:7px;background:#686868"></i><span class="rt" style="left:131.7px;top:1px;width:40px;text-align:center">0</span>
<i style="left:188px;top:16px;width:1px;height:7px;background:#686868"></i><span class="rt" style="left:168.7px;top:1px;width:40px;text-align:center">10</span>
<i style="left:225px;top:16px;width:1px;height:7px;background:#686868"></i><span class="rt" style="left:205.7px;top:1px;width:40px;text-align:center">20</span>
<i style="left:262px;top:16px;width:1px;height:7px;background:#686868"></i><span class="rt" style="left:242.7px;top:1px;width:40px;text-align:center">30</span>
<i style="left:299px;top:16px;width:1px;height:7px;background:#686868"></i><span class="rt" style="left:279.7px;top:1px;width:40px;text-align:center">40</span>
<i style="left:336px;top:16px;width:1px;height:7px;background:#686868"></i><span class="rt" style="left:316.7px;top:1px;width:40px;text-align:center">50</span>
<i style="left:373px;top:16px;width:1px;height:7px;background:#686868"></i><span class="rt" style="left:353.7px;top:1px;width:40px;text-align:center">60</span>
<i style="left:410px;top:16px;width:1px;height:7px;background:#686868"></i><span class="rt" style="left:390.7px;top:1px;width:40px;text-align:center">70</span>
<i style="left:447px;top:16px;width:1px;height:7px;background:#686868"></i><span class="rt" style="left:427.7px;top:1px;width:40px;text-align:center">80</span>
<i style="left:484px;top:16px;width:1px;height:7px;background:#686868"></i><span class="rt" style="left:464.7px;top:1px;width:40px;text-align:center">90</span>
<i style="left:521px;top:16px;width:1px;height:7px;background:#686868"></i><span class="rt" style="left:501.7px;top:1px;width:40px;text-align:center">100</span>
<i style="left:557px;top:16px;width:1px;height:7px;background:#686868"></i><span class="rt" style="left:537.7px;top:1px;width:40px;text-align:center">110</span>
<i style="left:594px;top:16px;width:1px;height:7px;background:#686868"></i><span class="rt" style="left:574.7px;top:1px;width:40px;text-align:center">120</span>
<i style="left:631px;top:16px;width:1px;height:7px;background:#686868"></i><span class="rt" style="left:611.7px;top:1px;width:40px;text-align:center">130</span>
<i style="left:668px;top:16px;width:1px;height:7px;background:#686868"></i><span class="rt" style="left:648.7px;top:1px;width:40px;text-align:center">140</span>
<i style="left:705px;top:16px;width:1px;height:7px;background:#686868"></i><span class="rt" style="left:685.7px;top:1px;width:40px;text-align:center">150</span>
<i style="left:742px;top:16px;width:1px;height:7px;background:#686868"></i><span class="rt" style="left:722.7px;top:1px;width:40px;text-align:center">160</span>
<i style="left:779px;top:16px;width:1px;height:7px;background:#686868"></i><span class="rt" style="left:759.7px;top:1px;width:40px;text-align:center">170</span>
<i style="left:816px;top:16px;width:1px;height:7px;background:#686868"></i><span class="rt" style="left:796.7px;top:1px;width:40px;text-align:center">180</span>
<i style="left:853px;top:16px;width:1px;height:7px;background:#686868"></i><span class="rt" style="left:833.7px;top:1px;width:40px;text-align:center">190</span>
<i style="left:890px;top:16px;width:1px;height:7px;background:#686868"></i><span class="rt" style="left:870.7px;top:1px;width:40px;text-align:center">200</span>
<i style="left:926px;top:16px;width:1px;height:7px;background:#686868"></i><span class="rt" style="left:906.7px;top:1px;width:40px;text-align:center">210</span>
<i style="left:963px;top:16px;width:1px;height:7px;background:#686868"></i><span class="rt" style="left:943.7px;top:1px;width:40px;text-align:center">220</span>
<i style="left:1000px;top:16px;width:1px;height:7px;background:#686868"></i><span class="rt" style="left:980.7px;top:1px;width:40px;text-align:center">230</span>
<i style="left:1037px;top:16px;width:1px;height:7px;background:#686868"></i><span class="rt" style="left:1017.7px;top:1px;width:40px;text-align:center">240</span>
</div>
<svg style="left:544px;top:13.300px" width="14" height="8"><path d="M0 0h11.300l-5.650 5.500z" fill="#000"/></svg></div>
<div id="rulerv" class="abs">
<i style="left:16px;top:543px;width:7px;height:1px;background:#686868"></i><span class="rt" style="left:-14.2px;top:538.5px;width:40px;text-align:center;transform:rotate(-90deg)">30</span>
<i style="left:16px;top:506px;width:7px;height:1px;background:#686868"></i><span class="rt" style="left:-14.2px;top:501.5px;width:40px;text-align:center;transform:rotate(-90deg)">40</span>
<i style="left:16px;top:469px;width:7px;height:1px;background:#686868"></i><span class="rt" style="left:-14.2px;top:464.5px;width:40px;text-align:center;transform:rotate(-90deg)">50</span>
<i style="left:16px;top:432px;width:7px;height:1px;background:#686868"></i><span class="rt" style="left:-14.2px;top:427.5px;width:40px;text-align:center;transform:rotate(-90deg)">60</span>
<i style="left:16px;top:395px;width:7px;height:1px;background:#686868"></i><span class="rt" style="left:-14.2px;top:390.5px;width:40px;text-align:center;transform:rotate(-90deg)">70</span>
<i style="left:16px;top:358px;width:7px;height:1px;background:#686868"></i><span class="rt" style="left:-14.2px;top:353.5px;width:40px;text-align:center;transform:rotate(-90deg)">80</span>
<i style="left:16px;top:321px;width:7px;height:1px;background:#686868"></i><span class="rt" style="left:-14.2px;top:316.5px;width:40px;text-align:center;transform:rotate(-90deg)">90</span>
<i style="left:16px;top:285px;width:7px;height:1px;background:#686868"></i><span class="rt" style="left:-14.2px;top:280.5px;width:40px;text-align:center;transform:rotate(-90deg)">100</span>
<i style="left:16px;top:248px;width:7px;height:1px;background:#686868"></i><span class="rt" style="left:-14.2px;top:243.5px;width:40px;text-align:center;transform:rotate(-90deg)">110</span>
<i style="left:16px;top:211px;width:7px;height:1px;background:#686868"></i><span class="rt" style="left:-14.2px;top:206.5px;width:40px;text-align:center;transform:rotate(-90deg)">120</span>
<i style="left:16px;top:174px;width:7px;height:1px;background:#686868"></i><span class="rt" style="left:-14.2px;top:169.5px;width:40px;text-align:center;transform:rotate(-90deg)">130</span>
<i style="left:16px;top:137px;width:7px;height:1px;background:#686868"></i><span class="rt" style="left:-14.2px;top:132.5px;width:40px;text-align:center;transform:rotate(-90deg)">140</span>
<i style="left:16px;top:100px;width:7px;height:1px;background:#686868"></i><span class="rt" style="left:-14.2px;top:95.5px;width:40px;text-align:center;transform:rotate(-90deg)">150</span>
<i style="left:16px;top:63px;width:7px;height:1px;background:#686868"></i><span class="rt" style="left:-14.2px;top:58.5px;width:40px;text-align:center;transform:rotate(-90deg)">160</span>
<i style="left:16px;top:26px;width:7px;height:1px;background:#686868"></i><span class="rt" style="left:-14.2px;top:21.5px;width:40px;text-align:center;transform:rotate(-90deg)">170</span>
<svg style="left:13.100px;top:277px" width="8" height="14"><path d="M0 0v11l5.800-5.500z" fill="#000"/></svg></div>
<div id="canvas" class="abs">
<i style="left:521px;top:0;width:1px;height:570px;background:#f7f7f7"></i>
<i style="left:154px;top:285px;width:771px;height:1px;background:#f7f7f7"></i>
<i style="left:0;top:0;width:154px;height:570px;background:#d3d3d3"></i>
<i style="left:150px;top:0;width:4px;height:570px;background:#c6c6c6"></i>
<i style="left:187px;top:0;width:3.700px;height:570px;background:#8282ff"></i>
<i style="left:888.200px;top:0;width:3.700px;height:570px;background:#8282ff"></i>
<i style="left:925px;top:0;width:117px;height:570px;background:#d3d3d3"></i>
<i style="left:925px;top:0;width:4px;height:570px;background:#c6c6c6"></i>
<i style="left:929px;top:0;width:13.500px;height:570px;background:#828282"></i>
<i style="left:336px;top:100px;width:370px;height:370px;border:1px solid #111"></i>
<svg style="left:514.700px;top:278.800px" width="12" height="12"><circle cx="6" cy="6" r="5" fill="none" stroke="#f04848" stroke-width="1"/><path d="M6 1v10M1 6h10" stroke="#f04848" stroke-width=".8" fill="none" opacity=".75"/></svg>
</div>
<div id="vscroll" class="abs"><i style="left:5.500px;top:148px;width:7px;height:273.500px;border-radius:3.500px;background:#7e7e7e"></i></div>
<div id="hscroll" class="abs"><i style="left:57px;top:5px;width:873px;height:8px;border-radius:4px;background:#7e7e7e"></i></div>
<div id="zoomlbl" class="abs">10 &lt; 100</div>
<div id="cmdhist" class="abs"><span style="left:5px;top:1px;font-size:13.400px;color:#0000d0;white-space:nowrap"><i style="position:static">Command:</i> printpreview</span><i style="left:1072px;top:-1px;width:7px;height:17px;border-radius:0 0 3.500px 3.500px;background:#7e7e7e"></i></div>
<div id="cmdline" class="abs"><span style="left:1px;top:7px;font-size:13.200px;line-height:16px;color:#000;white-space:nowrap;letter-spacing:0">Command:</span>
<i style="left:1055px;top:1px;width:26px;height:25px;border:1px solid #b5b5b5;background:linear-gradient(#fafafa,#e8e8e8)"></i>
<svg style="left:1061px;top:9px" width="16" height="13"><rect x=".500" y=".500" width="13" height="9.300" fill="#eee" stroke="#444" stroke-width=".9"/><rect x="0" y="0" width="14" height="2.800" fill="#000"/><rect x="10.300" y=".800" width="1.200" height="1.200" fill="#999"/></svg>
</div>
<div id="layers" class="abs"></div>
<div id="right" class="abs"></div>
<svg style="left:1154px;top:114px" width="346" height="684" viewBox="1154 114 346 684" font-family="Liberation Sans, sans-serif">
<defs>
<linearGradient id="lyb" x1="0" y1="0" x2="0" y2="1"><stop offset="0" stop-color="#e5e5e5"/><stop offset="1" stop-color="#f7f7f7"/></linearGradient>
<g id="eye"><path d="M-6.800 .600q6.800-8.200 13.600 0q-6.800 7.400-13.600 0z" fill="#fff" stroke="currentColor" stroke-width="1.900" stroke-linejoin="round"/><circle cx=".300" cy="-.600" r="2.800" fill="currentColor"/><circle cx="-.500" cy="-1.400" r=".800" fill="#fff"/><path d="M-6.800 .600q6.800-9.400 13.600 0" fill="none" stroke="currentColor" stroke-width="2.500"/></g>
<g id="pcl"><path d="M-6.500 6.500l1.300-4.300 10.200-9.400 2.700 2.700-10 9.600z" fill="#e8a030" stroke="#8a5a14" stroke-width=".7" stroke-linejoin="round"/><path d="M4 -6.300l1.500-1.300 2.700 2.700-1.400 1.400z" fill="#e02020"/><path d="M-6.500 6.500l.7-2.200 1.500 1.500z" fill="#222"/></g>
<g id="win"><rect x=".5" y=".5" width="27" height="27" fill="#fff" stroke="#2a2a2a" stroke-width="1"/><rect x="0" y="0" width="28" height="4.500" fill="#000"/><rect x="1" y="1" width="3" height="3" fill="#fff"/></g>
</defs>
<!-- title -->
<circle cx="1163.900" cy="124" r="6.900" fill="#555"/><path d="M1160.700 120.800l6.400 6.400M1167.100 120.800l-6.400 6.400" stroke="#fff" stroke-width="2.300"/>
<circle cx="1182" cy="124" r="6.900" fill="#555"/><rect x="1180.800" y="120.800" width="5" height="4" fill="none" stroke="#fff" stroke-width="1.200"/><rect x="1178.300" y="123.200" width="5" height="4" fill="#555" stroke="#fff" stroke-width="1.200"/>
<text x="1322" y="129" font-size="12.200" fill="#222" text-anchor="middle" textLength="51" lengthAdjust="spacingAndGlyphs">Layer List</text>
<!-- buttons -->
<rect x="1155" y="134.500" width="300" height="2" fill="#e6e6e6"/>
<g stroke="#ababab" stroke-width="1.300" fill="url(#lyb)"><rect x="1155.500" y="136.500" width="59" height="25.500"/><rect x="1215.500" y="136.500" width="59" height="25.500"/><rect x="1275.500" y="136.500" width="59" height="25.500"/><rect x="1335.500" y="136.500" width="59" height="25.500"/><rect x="1395.500" y="136.500" width="59" height="25.500"/></g>
<path d="M1155 162.500h300" stroke="#a8a8a8" stroke-width="1"/>
<use href="#eye" x="1185" y="149" color="#000"/>
<use href="#eye" x="1245" y="149" color="#a4a4a4"/>
<path d="M1299 149h12M1305 143v12" stroke="#e00000" stroke-width="3"/>
<path d="M1359 149h12" stroke="#e00000" stroke-width="3"/>
<path d="M1419.8 153.9 L1432.1 142.1" stroke="#8c6a1c" stroke-width="3.600"/><path d="M1419.8 153.9 L1429.9 144.2" stroke="#dca43c" stroke-width="2.600"/><path d="M1420.1 154.3 L1430.3 144.5" stroke="#f0c878" stroke-width=".800"/><path d="M1429.9 144.2 L1432.1 142.1" stroke="#ec1c24" stroke-width="2.800"/><path d="M1417.9 155.7 L1420.8 155.0 L1418.7 152.8 z" fill="#ecd8a0" stroke="#8c6a1c" stroke-width=".500"/><path d="M1417.9 155.7 L1418.7 154.9" stroke="#4a3208" stroke-width="1.200"/>
<!-- layer row -->
<rect x="1181.500" y="169.500" width="15" height="8" fill="#fff" stroke="#000" stroke-width="1"/>
<text x="1203" y="177.700" font-size="13" fill="#111">0</text>
<path d="M1396.4 177.6 L1407.9 166.7" stroke="#8c6a1c" stroke-width="3.600"/><path d="M1396.4 177.6 L1405.7 168.8" stroke="#dca43c" stroke-width="2.600"/><path d="M1396.7 178.0 L1406.1 169.1" stroke="#f0c878" stroke-width=".800"/><path d="M1405.7 168.8 L1407.9 166.7" stroke="#ec1c24" stroke-width="2.800"/><path d="M1394.5 179.4 L1397.4 178.7 L1395.4 176.5 z" fill="#ecd8a0" stroke="#8c6a1c" stroke-width=".500"/><path d="M1394.5 179.4 L1395.3 178.6" stroke="#4a3208" stroke-width="1.200"/>
<use href="#eye" x="1422.500" y="173" color="#000"/>
<path d="M1442 172.500v-2.300q0-3.300 3-3.300t3 3.300v2.300" fill="none" stroke="#c0c0c0" stroke-width="1.300"/><rect x="1440.100" y="172.300" width="9.500" height="7.100" fill="#b6b6b6"/>
<!-- right toolbar -->
<g fill="#aaa"><rect x="1461.700" y="122" width="2" height="2"/><rect x="1467.800" y="122" width="2" height="2"/><rect x="1473.900" y="122" width="2" height="2"/><rect x="1480" y="122" width="2" height="2"/><rect x="1486.100" y="122" width="2" height="2"/></g>
<rect x="1456.200" y="126" width="43.500" height="42.500" rx="5" fill="#b8b8b8"/>
<rect x="1456.200" y="423" width="43.500" height="43" rx="5" fill="#b8b8b8"/>
<path d="M1458 267.500h42M1458 415.500h42" stroke="#555" stroke-width="1" stroke-dasharray="1 2"/>
<use href="#win" x="1463" y="133"/><use href="#win" x="1463" y="180"/><use href="#win" x="1463" y="226"/><use href="#win" x="1463" y="282"/><use href="#win" x="1463" y="328"/><use href="#win" x="1463" y="374"/><use href="#win" x="1463" y="430"/><use href="#win" x="1463" y="477"/>
<!-- icon1 layers -->
<g stroke="#444" stroke-width=".7" stroke-linejoin="round"><path d="M1470.300 147.300l7-3.200v8.600l-7 3.200z" fill="#9a9a9a"/><path d="M1472.200 146.500l7-3.200v8.600l-7 3.200z" fill="#c4c4c4"/><path d="M1474.200 145.600l9-4.200v9.600l-9 4.200z" fill="#f4f4f4"/></g>
<path d="M1476.800 152.300l4-8.300.6 6.200M1478.200 149.800l3-.9" stroke="#f03838" stroke-width=".8" fill="none"/>
<!-- icon2 blocks -->
<rect x="1470.500" y="191" width="10" height="7.500" fill="#f6ecc0" stroke="#555" stroke-width=".8"/><circle cx="1479" cy="197.500" r="4.300" fill="#f6ecc0" fill-opacity=".8" stroke="#555" stroke-width=".8"/>
<!-- icon3 view -->
<rect x="1469" y="236.500" width="16.500" height="11.500" rx="2" fill="#f6f6f6" stroke="#b8c8e4" stroke-width="1.200"/>
<!-- icon4 list -->
<g fill="#000"><rect x="1467" y="291" width="3.800" height="3"/><rect x="1467" y="297" width="3.800" height="3"/><rect x="1467" y="303" width="3.800" height="3"/></g>
<g fill="#fff" stroke="#333" stroke-width=".8"><rect x="1473.500" y="291.200" width="13.500" height="2.600"/><rect x="1473.500" y="297.200" width="13.500" height="2.600"/><rect x="1473.500" y="303.200" width="13.500" height="2.600"/></g>
<!-- icon5 funnel -->
<path d="M1470 338q7.200-3 14.400 0l-5.700 6.500v7.500l-3-1.500v-6z" fill="#909090" stroke="#444" stroke-width=".8" stroke-linejoin="round"/><ellipse cx="1477.200" cy="338" rx="7.200" ry="1.600" fill="#c8c8c8" stroke="#444" stroke-width=".6"/>
<!-- icon6 screw -->
<path d="M1469.500 383.500l4 3.500v6l-4 3.500z" fill="#fff" stroke="#222" stroke-width=".9"/><rect x="1473.500" y="386.500" width="11.500" height="7" rx="1" fill="#bdbdbd" stroke="#333" stroke-width=".8"/><path d="M1468 390h19" stroke="#f06060" stroke-width=".8" stroke-dasharray="1.500 1"/><path d="M1478 387v6M1480 387v6M1482 387v6" stroke="#888" stroke-width=".6"/>
<!-- icon7 command -->
<path d="M1466 439h10M1466 442.300h11M1466 445.600h12M1466 448.900h12" stroke="#777" stroke-width="1.100" stroke-dasharray="2.500 .6 1.500 .5"/>
<path d="M1464 452.500h26.500" stroke="#000" stroke-width=".8"/><text x="1472.500" y="456.200" font-size="3.800" fill="#000">command</text><path d="M1466.800 453.800l-1.300 1 1.300 1" stroke="#000" stroke-width=".5" fill="none"/>
<!-- icon8 clipboard -->
<rect x="1471" y="486.500" width="13.500" height="15" rx="1" fill="#c08a30" stroke="#9a6a18" stroke-width=".7"/><rect x="1473" y="488.500" width="9.500" height="11" fill="#f2f2f2"/><rect x="1475" y="485.300" width="5.500" height="2.600" rx=".8" fill="#9a9a90" stroke="#666" stroke-width=".5"/><path d="M1474.500 491.500h6.500M1474.500 493.500h6.500M1474.500 495.500h5" stroke="#bbb" stroke-width=".8"/><path d="M1479.500 499.500v-2.500h3z" fill="#999"/>
</svg>
<div id="status" class="abs">
<span class="st" style="left:2px;top:10px;letter-spacing:-.12px">101.6,100.6</span>
<span class="st" style="left:2px;top:30.500px;letter-spacing:-.1px">@1.6,0.6</span>
<i style="left:253px;top:5px;width:1px;height:40px;background:#8a8a8a"></i>
<span class="st" style="left:256px;top:10px;letter-spacing:.15px">142.9787&lt;45°</span>
<span class="st" style="left:256px;top:30.500px;letter-spacing:.15px">@1.7088&lt;21°</span>
<i style="left:506px;top:22px;width:6px;height:6px;border-radius:3px;background:#cacaca"></i>
<i style="left:940px;top:22px;width:6px;height:6px;border-radius:3px;background:#cacaca"></i>
<i style="left:1269px;top:22px;width:6px;height:6px;border-radius:3px;background:#cacaca"></i>
<span class="st" style="left:949px;top:19.500px;letter-spacing:.19px">No entities selected.</span>
<svg style="left:716px;top:8px" width="20" height="32" viewBox="716 805 20 32"><rect x="717.400" y="806.300" width="17.400" height="29.500" rx="8.700" fill="#fff" stroke="#4a4a4a" stroke-width=".9"/><path d="M717.400 820q8.700-3 17.400 0" fill="none" stroke="#3c3c3c" stroke-width="1.600"/><path d="M726.100 806.500v12.200" stroke="#3c3c3c" stroke-width="1.300"/><rect x="724.300" y="808.200" width="3.600" height="7.800" rx="1.800" fill="#fff" stroke="#3c3c3c" stroke-width="1.200"/></svg>
</div>
<div id="leftext" class="abs" style="left:0;top:797px;width:72px;height:1.500px;background:linear-gradient(90deg,#f3f3f3 0,#e8e8e8 8%,#dedede 35%,#d4d4d4 75%,#cecece 94%,#bcbcbc 97.5%,#b6b6b6 100%)"></div>
<svg style="left:290px;top:48px" width="92" height="92" viewBox="290 48 92 92">
<defs><radialGradient id="halo" cx="335.600" cy="93.800" r="39.700" gradientUnits="userSpaceOnUse"><stop offset="0" stop-color="#fff" stop-opacity="0"/><stop offset=".7" stop-color="#fff" stop-opacity="0"/><stop offset=".85" stop-color="#fff" stop-opacity=".4"/><stop offset=".88" stop-color="#a4b8cc" stop-opacity=".42"/><stop offset=".97" stop-color="#a4b8cc" stop-opacity=".42"/><stop offset="1" stop-color="#a4b8cc" stop-opacity="0"/></radialGradient></defs>
<circle cx="335.600" cy="93.800" r="39.700" fill="url(#halo)"/>
<path d="M337.200 96v19l4.200-3.900 3.800 9 2.600-1.100-3.800-8.900h5.600z" fill="#fff" stroke="#000" stroke-width="1.500" stroke-linejoin="miter"/>
</svg>
</body></html>
